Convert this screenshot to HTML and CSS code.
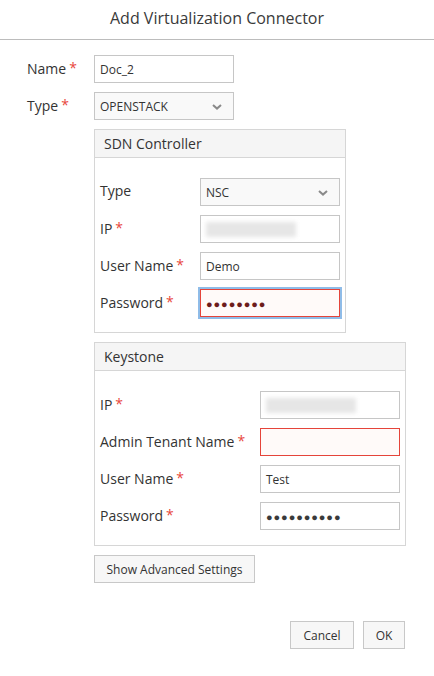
FILE: index.html
```html
<!DOCTYPE html>
<html>
<head>
<meta charset="utf-8">
<link rel="stylesheet" href="styles.css">
</head>
<body>
<div class="dialog">
  <div class="title">Add Virtualization Connector</div>
  <div class="form">
    <div class="row">
      <label class="lbl main-lbl">Name<span class="req">*</span></label>
      <div class="input"><span>Doc_2</span></div>
    </div>
    <div class="row">
      <label class="lbl main-lbl">Type<span class="req">*</span></label>
      <div class="input select"><span class="caps">OPENSTACK</span>
        <svg class="chev" width="10" height="6" viewBox="0 0 10 6"><path d="M1 1 L5 4.6 L9 1" fill="none" stroke="#8a8a8a" stroke-width="2"/></svg>
      </div>
    </div>

    <div class="fieldset sdn">
      <div class="fs-head">SDN Controller</div>
      <div class="fs-body">
        <div class="row">
          <label class="lbl sdn-lbl">Type</label>
          <div class="input select"><span>NSC</span>
            <svg class="chev" width="10" height="6" viewBox="0 0 10 6"><path d="M1 1 L5 4.6 L9 1" fill="none" stroke="#8a8a8a" stroke-width="2"/></svg>
          </div>
        </div>
        <div class="row">
          <label class="lbl sdn-lbl">IP<span class="req">*</span></label>
          <div class="input"><span class="blur"></span></div>
        </div>
        <div class="row">
          <label class="lbl sdn-lbl">User Name<span class="req">*</span></label>
          <div class="input"><span>Demo</span></div>
        </div>
        <div class="row">
          <label class="lbl sdn-lbl">Password<span class="req">*</span></label>
          <div class="input error focus"><span class="dots red-dots">●●●●●●●●</span></div>
        </div>
      </div>
    </div>

    <div class="fieldset ks">
      <div class="fs-head">Keystone</div>
      <div class="fs-body">
        <div class="row">
          <label class="lbl ks-lbl">IP<span class="req">*</span></label>
          <div class="input"><span class="blur"></span></div>
        </div>
        <div class="row">
          <label class="lbl ks-lbl">Admin Tenant Name<span class="req">*</span></label>
          <div class="input error"></div>
        </div>
        <div class="row">
          <label class="lbl ks-lbl">User Name<span class="req">*</span></label>
          <div class="input"><span>Test</span></div>
        </div>
        <div class="row">
          <label class="lbl ks-lbl">Password<span class="req">*</span></label>
          <div class="input"><span class="dots">●●●●●●●●●●</span></div>
        </div>
      </div>
    </div>

    <div class="adv"><button class="btn adv-btn">Show Advanced Settings</button></div>
  </div>
  <div class="footer">
    <button class="btn cancel">Cancel</button>
    <button class="btn ok">OK</button>
  </div>
</div>
</body>
</html>
```

FILE: styles.css
```css
* { box-sizing: border-box; }
html, body { margin: 0; padding: 0; background: #fff; }
body { font-family: "Open Sans", "Noto Sans", sans-serif; color: #333; width: 434px; height: 676px; }
.dialog { width: 434px; }
.title {
  height: 40px;
  border-bottom: 1px solid #bcbcbc;
  text-align: center;
  font-size: 16px;
  line-height: 37px;
  color: #3a3a3a;
}
.form { padding: 15px 0 0 27px; }
.row { display: flex; align-items: center; height: 28px; margin-bottom: 9px; }
.row:last-child { margin-bottom: 0; }
.lbl { font-size: 14px; color: #333; display: block; line-height: 20px; margin-top: -2px; }
.main-lbl { width: 67px; }
.sdn-lbl { width: 100px; }
.ks-lbl { width: 160px; }
.req { color: #e8473b; margin-left: 3px; font-size: 14px; vertical-align: 1px; }
.input {
  width: 140px;
  height: 28px;
  border: 1px solid #c6c6c6;
  background: #fff;
  font-size: 12px;
  color: #333;
  display: flex;
  align-items: center;
  padding-left: 5px;
}
.select { background: #f9f9f9; justify-content: space-between; padding-right: 11px; }
.caps { font-size: 12px; }
.chev { display: block; margin-top: 1px; }
.blur {
  display: inline-block;
  width: 90px;
  height: 15px;
  background: #e6e6e6;
  filter: blur(2px);
}
.error { border-color: #e5443a; background: #fffaf9; }
.focus { box-shadow: 0 0 0 2px #8fbce8; }
.dots { font-size: 11px; letter-spacing: 0.9px; color: #3a3a3a; }
.red-dots { color: #6d1c1c; }
.fieldset {
  border: 1px solid #d6d6d6;
  margin-left: 67px;
}
.sdn { width: 252px; }
.ks { width: 312px; margin-top: 9px; }
.fs-head {
  height: 28px;
  background: #f5f5f5;
  border-bottom: 1px solid #d6d6d6;
  font-size: 14px;
  line-height: 27px;
  padding-left: 9px;
  color: #333;
}
.fs-body { padding: 20px 5px 15px 5px; }
.btn {
  font-family: "Open Sans", "Noto Sans", sans-serif;
  font-size: 12px;
  color: #333;
  background: #f7f7f7;
  border: 1px solid #c8c8c8;
  height: 28px;
  padding: 0;
  margin: 0;
}
.adv { margin-top: 9px; margin-left: 67px; }
.adv-btn { width: 161px; }
.footer { display: flex; justify-content: flex-end; gap: 9px; padding: 38px 29px 0 0; }
.cancel { width: 64px; }
.ok { width: 42px; }
```
